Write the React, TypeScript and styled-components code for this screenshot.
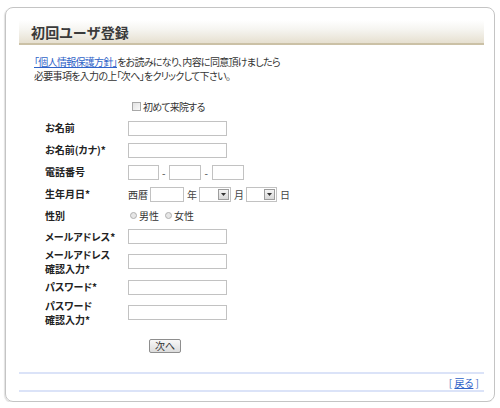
import React from "react";
import styled, { createGlobalStyle } from "styled-components";

const GlobalStyle = createGlobalStyle`
  html, body {
    margin: 0;
    padding: 0;
    background: #ffffff;
  }
  body {
    font-family: "Noto Sans CJK JP", "Liberation Sans", sans-serif;
    font-feature-settings: "palt";
    color: #333333;
  }
`;

const Frame = styled.div`
  box-sizing: border-box;
  width: 490px;
  height: 395px;
  margin: 7px 0 0 5px;
  border: 1px solid #c4c4c4;
  border-radius: 8px;
  box-shadow: -1px 1px 1px rgba(0, 0, 0, 0.12);
  display: flex;
  flex-direction: column;
`;

const Header = styled.div`
  box-sizing: border-box;
  height: 25px;
  margin: 12px 10px 0 13px;
  padding-left: 12px;
  background: linear-gradient(to bottom, #ffffff 0%, #f6f5f1 40%, #e6e0d0 100%);
  border-bottom: 2px solid #cbc1a6;
  display: flex;
  align-items: center;
`;

const Title = styled.h1`
  margin: 0;
  font-size: 14px;
  font-weight: 700;
  color: #3a3a3a;
  letter-spacing: 0.2px;
`;

const Intro = styled.p`
  margin: 10px 0 0 28px;
  font-size: 10px;
  line-height: 14px;
  letter-spacing: -0.7px;
`;

const Link = styled.a`
  color: #2f63c8;
  text-decoration: underline;
`;

const CheckRow = styled.label`
  display: flex;
  align-items: center;
  height: 14px;
  margin: 16px 0 0 126px;
  font-size: 10px;
  letter-spacing: -0.8px;
  gap: 2px;
`;

const CheckBox = styled.span`
  box-sizing: border-box;
  width: 9px;
  height: 9px;
  border: 1px solid #a8a8a8;
  background: linear-gradient(to bottom right, #e2e2e2, #fafafa);
`;

const Form = styled.div`
  margin: 4px 0 0 39px;
  display: flex;
  flex-direction: column;
`;

const Row = styled.div<{ $h: number }>`
  display: flex;
  align-items: center;
  height: ${({ $h }) => $h}px;
`;

const Label = styled.div`
  width: 83px;
  font-size: 10px;
  font-weight: 700;
  line-height: 14px;
  color: #222222;
`;

const Field = styled.div`
  display: flex;
  align-items: center;
  font-size: 10px;
`;

const TextBox = styled.span<{ $w: number }>`
  box-sizing: border-box;
  display: inline-block;
  width: ${({ $w }) => $w}px;
  height: 15px;
  border: 1px solid #c2c2c2;
  background: #ffffff;
`;

const Select = styled.span<{ $w: number }>`
  box-sizing: border-box;
  display: inline-flex;
  justify-content: flex-end;
  align-items: center;
  width: ${({ $w }) => $w}px;
  height: 15px;
  border: 1px solid #c2c2c2;
  background: #ffffff;
  padding-right: 1px;
`;

const SelectBtn = styled.span`
  box-sizing: border-box;
  width: 11px;
  height: 11px;
  border: 1px solid #9d9d9d;
  background: linear-gradient(to bottom, #f4f4f4, #d8d8d8);
  display: flex;
  align-items: center;
  justify-content: center;
`;

const Sep = styled.span<{ $l: number; $r: number }>`
  margin: 0 ${({ $r }) => $r}px 0 ${({ $l }) => $l}px;
  color: #444444;
`;

const Radio = styled.span`
  box-sizing: border-box;
  width: 7px;
  height: 7px;
  border-radius: 50%;
  border: 1px solid #b0b0b0;
  background: #e6e6e6;
  margin-right: 2px;
`;

const Submit = styled.button`
  box-sizing: border-box;
  margin: 12px 0 0 143px;
  width: 32px;
  height: 14px;
  padding: 0;
  font-family: inherit;
  font-size: 10px;
  line-height: 12px;
  color: #333333;
  border: 1px solid #8e8e8e;
  border-radius: 2px;
  background: linear-gradient(to bottom, #f8f8f8, #dcdcdc);
`;

const Footer = styled.div`
  margin: 17px 10px 0 13px;
  border-top: 2px solid #dbe3f8;
  border-bottom: 2px solid #dbe3f8;
  height: 16px;
  display: flex;
  align-items: center;
  justify-content: flex-end;
  padding-right: 5px;
  font-size: 10px;
`;

const Back = styled.span`
  color: #4a73c9;
`;

const Arrow = () => (
  <svg width="5" height="3" viewBox="0 0 5 3">
    <path d="M0 0 H5 L2.5 3 Z" fill="#333" />
  </svg>
);

export default function App() {
  return (
    <>
      <GlobalStyle />
      <Frame>
        <Header>
          <Title>初回ユーザ登録</Title>
        </Header>
        <Intro>
          <Link href="#">「個人情報保護方針」</Link>をお読みになり、内容に同意頂けましたら
          <br />
          必要事項を入力の上「次へ」をクリックして下さい。
        </Intro>
        <CheckRow>
          <CheckBox />
          初めて来院する
        </CheckRow>
        <Form>
          <Row $h={22}>
            <Label>お名前</Label>
            <TextBox $w={99} />
          </Row>
          <Row $h={22}>
            <Label>お名前(カナ)*</Label>
            <TextBox $w={99} />
          </Row>
          <Row $h={22}>
            <Label>電話番号</Label>
            <Field>
              <TextBox $w={31} />
              <Sep $l={3} $r={4}>-</Sep>
              <TextBox $w={32} />
              <Sep $l={3} $r={4}>-</Sep>
              <TextBox $w={32} />
            </Field>
          </Row>
          <Row $h={22}>
            <Label>生年月日*</Label>
            <Field>
              西暦
              <Sep $l={2} $r={0} />
              <TextBox $w={34} />
              <Sep $l={3} $r={2}>年</Sep>
              <Select $w={32}>
                <SelectBtn>
                  <Arrow />
                </SelectBtn>
              </Select>
              <Sep $l={3} $r={2}>月</Sep>
              <Select $w={31}>
                <SelectBtn>
                  <Arrow />
                </SelectBtn>
              </Select>
              <Sep $l={3} $r={0}>日</Sep>
            </Field>
          </Row>
          <Row $h={21}>
            <Label>性別</Label>
            <Field>
              <Sep $l={2} $r={0} />
              <Radio />
              男性
              <Sep $l={6} $r={0} />
              <Radio />
              女性
            </Field>
          </Row>
          <Row $h={21}>
            <Label>メールアドレス*</Label>
            <TextBox $w={99} />
          </Row>
          <Row $h={29}>
            <Label>
              メールアドレス
              <br />
              確認入力*
            </Label>
            <TextBox $w={99} />
          </Row>
          <Row $h={22}>
            <Label>パスワード*</Label>
            <TextBox $w={99} />
          </Row>
          <Row $h={29}>
            <Label>
              パスワード
              <br />
              確認入力*
            </Label>
            <TextBox $w={99} />
          </Row>
        </Form>
        <div>
          <Submit>次へ</Submit>
        </div>
        <Footer>
          <Back>
            [ <Link href="#">戻る</Link> ]
          </Back>
        </Footer>
      </Frame>
    </>
  );
}
